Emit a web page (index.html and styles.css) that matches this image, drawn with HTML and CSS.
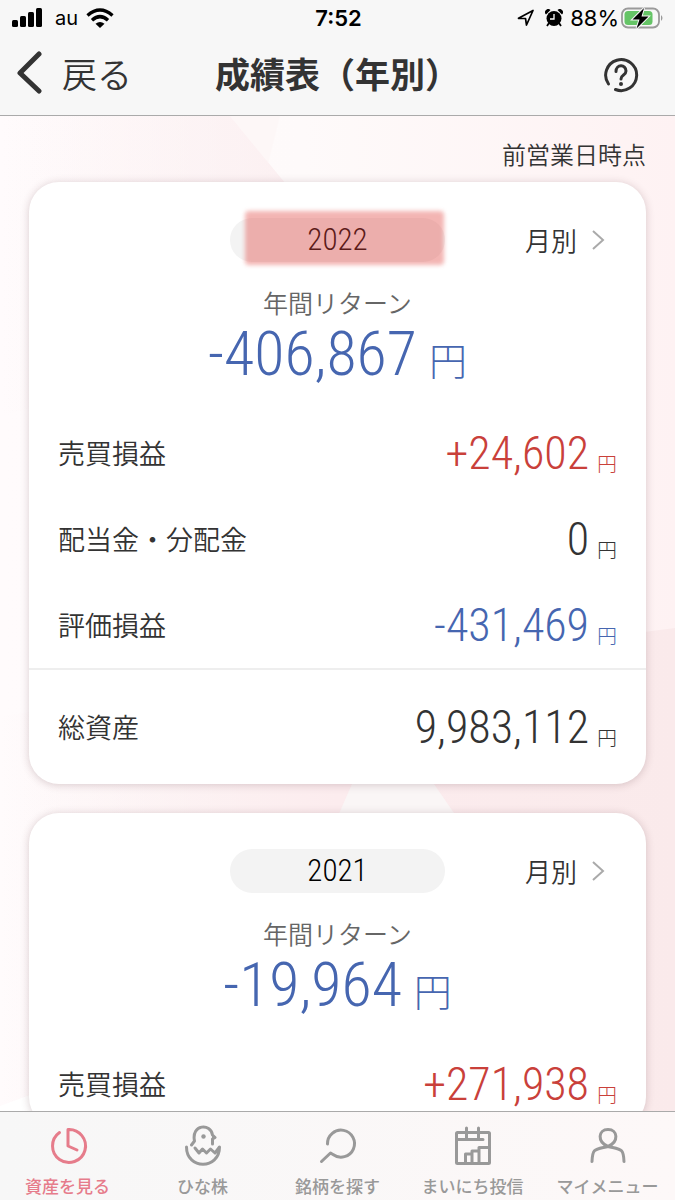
FILE: index.html
```
<!DOCTYPE html>
<html lang="ja">
<head>
    <meta charset="UTF-8">
    <meta name="viewport" content="width=device-width, initial-scale=1.0">
    <title>成績表（年別）</title>
    <link rel="stylesheet" href="styles.css">
</head>
<body>
    <header class="header">
        <!-- ステータスバー -->
        <div class="status">
            <div class="status-left">
                <svg width="31" height="20" viewBox="0 0 31 20">
                    <rect x="0" y="12" width="6" height="7" rx="1.5"/>
                    <rect x="8" y="8" width="6" height="11" rx="1.5"/>
                    <rect x="16" y="4" width="6" height="15" rx="1.5"/>
                    <rect x="24" y="0" width="6" height="19" rx="1.5"/>
                </svg>
                <span class="carrier">au</span>
                <svg width="28" height="20" viewBox="0 0 28 20" fill="none" stroke="#000" stroke-width="3.4">
                    <path d="M1.5 7.5Q14 -3.5 26.5 7.5"/>
                    <path d="M6 12.3Q14 5 22 12.3"/>
                    <path d="M9.5 15.8Q14 12 18.5 15.8L14 20Z" fill="#000" stroke="none"/>
                </svg>
            </div>
            <time class="clock">7:52</time>
            <div class="status-right">
                <svg width="18" height="18" viewBox="0 0 18 18" fill="none" stroke="#000" stroke-width="1.7" stroke-linejoin="round">
                    <path d="M1.5 9.3L16 1.5L9.5 16L8.5 9.5Z"/>
                </svg>
                <svg class="alarm" width="18" height="18" viewBox="0 0 18 18">
                    <path d="M1 5.5A3 3 0 0 1 5.5 1ZM17 5.5A3 3 0 0 0 12.5 1Z"/>
                    <circle cx="9" cy="9.5" r="7.5"/>
                    <path d="M4 14L2 17M14 14L16 17" stroke="#000" stroke-width="1.8"/>
                    <path d="M9 5V10H5" fill="none" stroke="#fff" stroke-width="1.3"/>
                </svg>
                <span class="percent">88%</span>
                <svg width="44" height="22" viewBox="0 0 44 22">
                    <rect x="1" y="1.5" width="37" height="19" rx="6" fill="none" stroke="#9a9a9a" stroke-width="1.8"/>
                    <rect x="3.5" y="4" width="28" height="14" rx="3.5" fill="#65c466"/>
                    <path d="M40 8Q43 11 40 14Z" fill="#9a9a9a"/>
                    <path d="M23 1L11.5 12.5H18.5L15.5 21.5L27.5 9.5H20.5Z" fill="#000" stroke="#f7f7f7" stroke-width="2" paint-order="stroke"/>
                </svg>
            </div>
        </div>
        <!-- ナビゲーション -->
        <nav class="nav">
            <a class="back" href="#">
                <svg width="28" height="44" viewBox="0 0 28 44" fill="none" stroke="#333" stroke-width="5" stroke-linecap="round" stroke-linejoin="round">
                    <path d="M25 3L6 22L25 40"/>
                </svg>
                戻る
            </a>
            <h1>成績表（年別）</h1>
            <button class="help" type="button" aria-label="ヘルプ">
                <svg width="36" height="36" viewBox="0 0 36 36" fill="none" stroke="#333" stroke-width="3" stroke-linecap="round">
                    <path d="M5.5 27A15.5 15.5 0 1 1 12.5 32.5"/>
                    <path d="M13 14.5C13 7 23 7 23 14C23 18.5 18 17.5 18 22"/>
                    <circle cx="18" cy="27" r="2" fill="#333" stroke="none"/>
                </svg>
            </button>
        </nav>
    </header>

    <main class="main">
        <!-- 背景の模様 -->
        <svg class="pattern" viewBox="0 0 675 995" preserveAspectRatio="none">
            <defs>
                <linearGradient id="base" x1="0" x2="1">
                    <stop offset="0" stop-color="#fffbfc"/>
                    <stop offset="0.45" stop-color="#fefafa"/>
                    <stop offset="1" stop-color="#fef2f3"/>
                </linearGradient>
                <linearGradient id="left" x1="0" x2="1">
                    <stop offset="0" stop-color="#fbedef" stop-opacity="0"/>
                    <stop offset="1" stop-color="#fbedef"/>
                </linearGradient>
                <linearGradient id="right" x1="0" x2="1">
                    <stop offset="0" stop-color="#faeaeb" stop-opacity="0"/>
                    <stop offset="0.5" stop-color="#fcecee"/>
                    <stop offset="1" stop-color="#faeaeb"/>
                </linearGradient>
            </defs>
            <rect width="675" height="995" fill="url(#base)"/>
            <path d="M230 0H280L268 48L285 67Z" fill="#fdf7f7"/>
            <path d="M0 0H230L285 67L380 200L0 300Z" fill="url(#left)"/>
            <path d="M0 600L675 512V995H0Z" fill="url(#right)"/>
            <path d="M352 668H434L456 700H338Z" fill="#faf6f6"/>
            <path d="M0 990L60 968V995H0Z" fill="#fff"/>
        </svg>

        <p class="asof">前営業日時点</p>

        <section class="card">
            <div class="card-head">
                <h2 class="year marked">2022</h2>
                <a class="monthly" href="#">月別
                    <svg width="14" height="22" viewBox="0 0 14 22" fill="none" stroke="#aaa" stroke-width="2"><path d="M2 2L12 11L2 20"/></svg>
                </a>
            </div>
            <p class="caption">年間リターン</p>
            <p class="total minus">-406,867<span class="yen">円</span></p>
            <dl class="rows">
                <div class="row">
                    <dt>売買損益</dt>
                    <dd class="plus">+24,602<span class="yen">円</span></dd>
                </div>
                <div class="row">
                    <dt>配当金・分配金</dt>
                    <dd>0<span class="yen">円</span></dd>
                </div>
                <div class="row">
                    <dt>評価損益</dt>
                    <dd class="minus">-431,469<span class="yen">円</span></dd>
                </div>
                <div class="row asset">
                    <dt>総資産</dt>
                    <dd>9,983,112<span class="yen">円</span></dd>
                </div>
            </dl>
        </section>

        <section class="card">
            <div class="card-head">
                <h2 class="year">2021</h2>
                <a class="monthly" href="#">月別
                    <svg width="14" height="22" viewBox="0 0 14 22" fill="none" stroke="#aaa" stroke-width="2"><path d="M2 2L12 11L2 20"/></svg>
                </a>
            </div>
            <p class="caption">年間リターン</p>
            <p class="total minus">-19,964<span class="yen">円</span></p>
            <dl class="rows">
                <div class="row">
                    <dt>売買損益</dt>
                    <dd class="plus">+271,938<span class="yen">円</span></dd>
                </div>
            </dl>
        </section>
    </main>

    <!-- タブバー -->
    <nav class="tabs">
        <a class="tab active" href="#">
            <svg width="42" height="42" viewBox="0 0 42 42">
                <path d="M12.5 7.5A16.5 16.5 0 1 0 21 4.5V21L30 25"/>
            </svg>
            資産を見る
        </a>
        <a class="tab" href="#">
            <svg width="42" height="42" viewBox="0 0 42 42">
                <path d="M4.5 22C4.5 45 37.5 45 37.5 22L33 28L28.5 24L24.5 28L20.5 24L17 28L13 23"/>
                <path d="M9.5 20L12.5 16C9 -1 29 -2 30.5 10L33 12.5L30.5 14V19"/>
                <circle cx="21.5" cy="11.5" r="2.2" class="dot"/>
                <path d="M30 9V15L34 12.5Z" class="dot"/>
            </svg>
            ひな株
        </a>
        <a class="tab" href="#">
            <svg width="42" height="42" viewBox="0 0 42 42">
                <path d="M10.5 19A13.5 13.5 0 1 1 16 29.5L13.5 28L4.5 36.5"/>
            </svg>
            銘柄を探す
        </a>
        <a class="tab" href="#">
            <svg width="42" height="42" viewBox="0 0 42 42">
                <rect x="4.5" y="7.5" width="33" height="31" rx="1"/>
                <path d="M5 14.5H31M14.5 3V14M26.5 3V14M13.5 38V29H20V38M20 29V26H27V38M27 26V22.5H37"/>
            </svg>
            まいにち投信
        </a>
        <a class="tab" href="#">
            <svg width="42" height="42" viewBox="0 0 42 42">
                <path d="M21 21.5C10 17 11 4.5 21 4.5S32 17 21 21.5C8 24.5 5.5 23 5 36.5M21 21.5C34 24.5 36.5 23 37 36.5"/>
            </svg>
            マイメニュー
        </a>
    </nav>
</body>
</html>
```
FILE: styles.css
```
* {
    box-sizing: border-box;
}

body {
    margin: 0;
    height: 100vh;
    display: flex;
    flex-direction: column;
    font-family: "Noto Sans CJK JP", sans-serif;
    font-weight: 350;
    color: #333;
}

h1, h2, p, dl, dd {
    margin: 0;
    font-weight: inherit;
}

a {
    color: inherit;
    text-decoration: none;
}

/* ヘッダー */
.header {
    flex: none;
    background: #f7f7f7;
    border-bottom: 1px solid #aaa;
}

.status {
    display: grid;
    grid-template-columns: 1fr auto 1fr;
    align-items: center;
    height: 36px;
    padding: 0 10px 0 12px;
    font-family: Inter, sans-serif;
    font-weight: 400;
    font-size: 22px;
    color: #000;
}

.status-left,
.status-right {
    display: flex;
    align-items: center;
}

.status-right {
    justify-content: flex-end;
}

.carrier {
    margin: 0 8px 0 12px;
    font-size: 20px;
}

.clock {
    font-weight: 600;
}

.alarm {
    margin: 0 7px 0 10px;
}

.percent {
    margin-right: 2px;
}

.nav {
    display: grid;
    grid-template-columns: 1fr auto 1fr;
    align-items: center;
    height: 79px;
    padding: 0 14px 6px;
}

.back {
    display: flex;
    align-items: center;
    gap: 20px;
    font-size: 35px;
}

.nav h1 {
    font-size: 35px;
    font-weight: 700;
}

.help {
    justify-self: end;
    display: flex;
    margin-right: 22px;
    padding: 4px 0 0;
    border: none;
    background: none;
    cursor: pointer;
}

/* 本文 */
.main {
    flex: 1;
    min-height: 0;
    position: relative;
    padding: 20px 29px 0;
    overflow: hidden;
}

.pattern {
    position: absolute;
    inset: 0;
    width: 100%;
    height: 100%;
    z-index: -1;
}

.asof {
    margin-bottom: 10px;
    font-size: 24px;
    line-height: 36px;
    text-align: right;
}

.card {
    margin-bottom: 29px;
    padding-top: 36px;
    background: #fff;
    border-radius: 30px;
    box-shadow: 0 1px 8px rgba(80, 40, 50, 0.22);
}

.card-head {
    display: grid;
    grid-template-columns: 1fr 215px 1fr;
    align-items: center;
    padding: 0 41px;
}

.year {
    position: relative;
    grid-column: 2;
    height: 44px;
    border-radius: 22px;
    background: #f3f3f3;
    font-family: "Roboto Condensed", Roboto, sans-serif;
    font-weight: 300;
    font-size: 31px;
    line-height: 44px;
    text-align: center;
    color: #000;
}

/* 年のマーカー */
.marked::after {
    content: "";
    position: absolute;
    inset: -7px 1px -3px 15px;
    border-radius: 4px;
    background: rgba(226, 70, 64, 0.4);
    filter: blur(2px);
}

.monthly {
    justify-self: end;
    display: flex;
    align-items: center;
    gap: 14px;
    font-size: 26px;
    line-height: 40px;
}

.caption {
    margin-top: 22px;
    font-size: 25px;
    line-height: 36px;
    text-align: center;
    color: #666;
}

.total {
    font-family: "Roboto Condensed", Roboto, sans-serif;
    font-weight: 300;
    font-size: 62px;
    line-height: 68px;
    text-align: center;
}

.rows {
    padding-top: 22px;
}

.row {
    display: flex;
    align-items: center;
    justify-content: space-between;
    height: 86px;
    padding: 0 29px;
    font-size: 27px;
}

.row dt {
    padding-bottom: 2px;
}

.row dd {
    font-family: "Roboto Condensed", Roboto, sans-serif;
    font-weight: 300;
    font-size: 46px;
    line-height: 60px;
}

.asset {
    height: 116px;
    border-top: 2px solid #eee;
}

.yen {
    margin-left: 8px;
    font-family: "Noto Sans CJK JP", sans-serif;
    font-size: 20px;
    line-height: 20px;
    vertical-align: -3px;
}

.total .yen {
    margin-left: 12px;
    font-size: 38px;
    vertical-align: 0;
}

.plus {
    color: #c9403a;
}

.minus {
    color: #4666b0;
}

/* タブバー */
.tabs {
    flex: none;
    display: flex;
    height: 89px;
    border-top: 1px solid #aaa;
    background: linear-gradient(90deg, #f7f7f7, #fdf8f8);
}

.tab {
    flex: 1;
    display: flex;
    flex-direction: column;
    align-items: center;
    padding-top: 13px;
    font-size: 17px;
    font-weight: 500;
    line-height: 38px;
    color: #999;
}

.tab svg {
    flex: none;
    fill: none;
    stroke: currentColor;
    stroke-width: 3;
    stroke-linecap: round;
    stroke-linejoin: round;
}

.tab .dot {
    fill: currentColor;
    stroke: none;
}

.active {
    color: #e67c8b;
}
```
